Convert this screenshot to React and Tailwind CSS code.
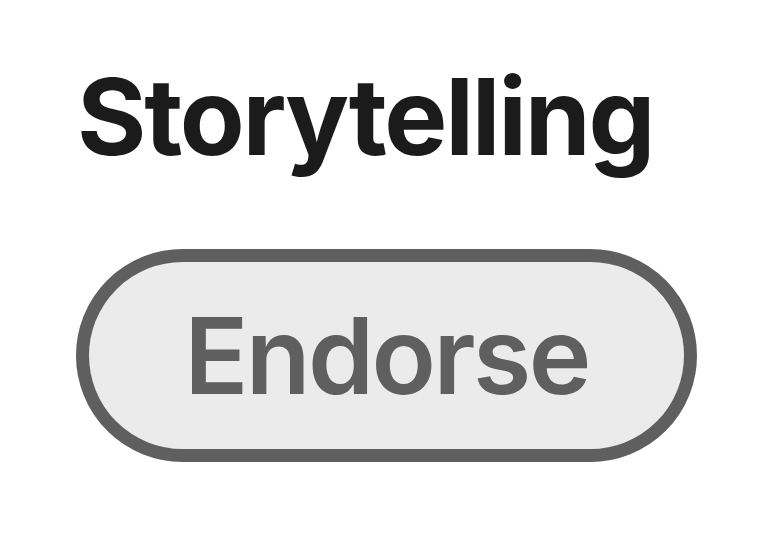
import React from 'react';

export default function App() {
  return (
    <div className="min-h-screen w-full bg-white font-['Inter',sans-serif]">
      <div className="flex flex-col items-start pl-[76px] pt-[64px]">
        <h1 className="text-[106px] font-bold leading-none tracking-[-2.2px] text-[#1b1b1b] pl-[1px]">
          Storytelling
        </h1>
        <button className="mt-[79px] flex h-[213px] w-[621px] items-center justify-center rounded-full border-[13px] border-[#5f5f5f] bg-[#ebebeb]">
          <span className="text-[106px] font-semibold leading-none tracking-[-2.6px] text-[#5f5f5f]">Endorse</span>
        </button>
      </div>
    </div>
  );
}
